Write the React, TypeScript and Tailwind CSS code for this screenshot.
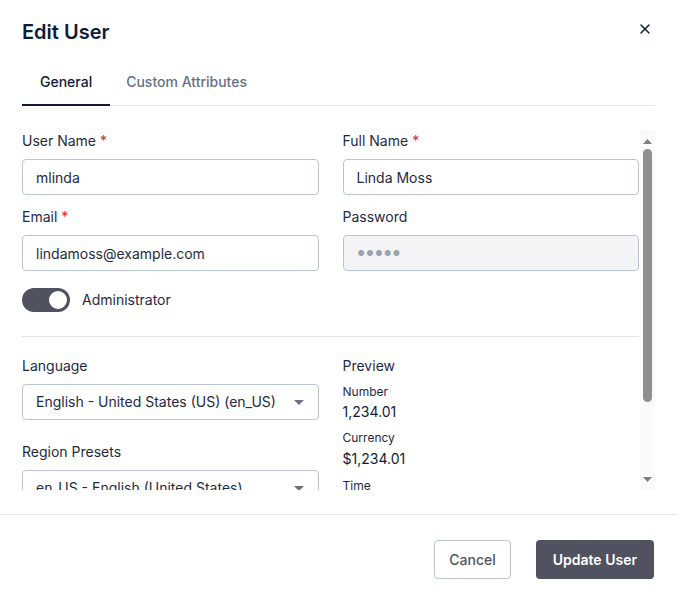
import { X } from "lucide-react";

function Label({ children, required }: { children: React.ReactNode; required?: boolean }) {
  return (
    <div className="mb-2 text-sm leading-5 text-[#1e2a44]">
      {children}
      {required && <span className="ml-1 text-[#dc2626]">*</span>}
    </div>
  );
}

function TextField({ value }: { value: string }) {
  return (
    <input
      readOnly
      value={value}
      className="h-9 w-full rounded-[4px] border border-[#b9c5d6] bg-white px-[13px] text-sm text-[#1e2a44] outline-none"
    />
  );
}

function Select({ value }: { value: string }) {
  return (
    <div className="flex h-9 w-full items-center justify-between rounded-[4px] border border-[#b9c5d6] bg-white pl-[13px] pr-[14px] text-sm text-[#1e2a44]">
      <span className="truncate">{value}</span>
      <svg width="10" height="5" viewBox="0 0 10 5" className="shrink-0">
        <path d="M0 0h10L5 5z" fill="#6b7280" />
      </svg>
    </div>
  );
}

// classic scrollbar look, drawn since headless overlay scrollbars are invisible
function ScrollBar() {
  return (
    <div className="flex w-[15px] shrink-0 flex-col items-center bg-[#fafafa] pt-[9px] pb-[4px]">
      <svg width="9" height="5" viewBox="0 0 9 5" className="shrink-0">
        <path d="M0 5L4.5 0L9 5z" fill="#7f7f7f" />
      </svg>
      <div className="mt-[5px] h-[253px] w-[9px] rounded-full bg-[#8f8f8f]" />
      <div className="flex-1" />
      <svg width="9" height="5" viewBox="0 0 9 5" className="mb-[4px] shrink-0">
        <path d="M0 0h9L4.5 5z" fill="#7f7f7f" />
      </svg>
    </div>
  );
}

export default function App() {
  return (
    <div className="flex h-[602px] w-full flex-col bg-white font-['Inter',sans-serif] text-[#1e2a44]">
      <div className="px-[22px]">
        <div className="flex items-center justify-between pt-[18px]">
          <h1 className="text-[20px] font-semibold leading-7 text-[#0f1b38]">Edit User</h1>
          <button className="-mt-[6px] mr-[2px] text-[#0f1b38]">
            <X size={16} strokeWidth={2.2} />
          </button>
        </div>

        <div className="mt-[14px] flex border-b border-[#e2e5ea]">
          <button className="-mb-px border-b-2 border-[#0f1b38] px-[18px] pb-[12px] pt-3 text-sm font-medium text-[#0f1b38]">
            General
          </button>
          <button className="-mb-px border-b-2 border-transparent px-4 pb-[12px] pt-3 text-sm font-medium text-[#64708a]">
            Custom Attributes
          </button>
        </div>

        <div className="mt-[24px] flex h-[360px]">
          <div className="min-w-0 flex-1 overflow-hidden pr-px">
            <div className="grid grid-cols-2 gap-x-6 pt-px">
              <div>
                <Label required>User Name</Label>
                <TextField value="mlinda" />
              </div>
              <div>
                <Label required>Full Name</Label>
                <TextField value="Linda Moss" />
              </div>
              <div className="mt-3">
                <Label required>Email</Label>
                <TextField value="lindamoss@example.com" />
              </div>
              <div className="mt-3">
                <Label>Password</Label>
                <div className="flex h-9 w-full items-center rounded-[4px] border border-[#b9c5d6] bg-[#f3f4f6] px-[14px]">
                  <span className="text-[8px] tracking-[1.5px] text-[#9ca3af]">●●●●●</span>
                </div>
              </div>
            </div>

            <div className="mt-[17px] flex items-center gap-3">
              <div className="flex h-6 w-12 items-center justify-end rounded-full bg-[#50535f] px-[3px]">
                <div className="h-[18px] w-[18px] rounded-full bg-white" />
              </div>
              <span className="text-sm text-[#1e2a44]">Administrator</span>
            </div>

            <div className="mt-6 border-t border-[#e2e5ea]" />

            <div className="mt-[19px] grid grid-cols-2 gap-x-6">
              <div>
                <Label>Language</Label>
                <Select value="English - United States (US) (en_US)" />
                <div className="mt-[22px]">
                  <Label>Region Presets</Label>
                  <Select value="en_US - English (United States)" />
                </div>
              </div>
              <div>
                <div className="text-sm leading-5 text-[#1e2a44]">Preview</div>
                <div className="mt-2 text-xs leading-4 text-[#1e2a44]">Number</div>
                <div className="mt-[2px] text-sm leading-5 text-[#0f1b38]">1,234.01</div>
                <div className="mt-2 text-xs leading-4 text-[#1e2a44]">Currency</div>
                <div className="mt-[3px] text-sm leading-5 text-[#0f1b38]">$1,234.01</div>
                <div className="mt-[9px] text-xs leading-4 text-[#1e2a44]">Time</div>
                <div className="mt-[2px] text-sm leading-5 text-[#0f1b38]">11:34 AM</div>
              </div>
            </div>
          </div>
          <ScrollBar />
        </div>
      </div>

      <div className="mt-[24px] flex justify-end gap-[25px] border-t border-[#e2e5ea] px-[23px] pt-[25px]">
        <button className="h-[39px] rounded-[4px] border border-[#b9c5d6] bg-white px-[14px] text-sm font-medium text-[#4b5468]">
          Cancel
        </button>
        <button className="h-[39px] rounded-[4px] bg-[#50525f] px-[17px] text-sm font-semibold text-white">
          Update User
        </button>
      </div>
    </div>
  );
}
